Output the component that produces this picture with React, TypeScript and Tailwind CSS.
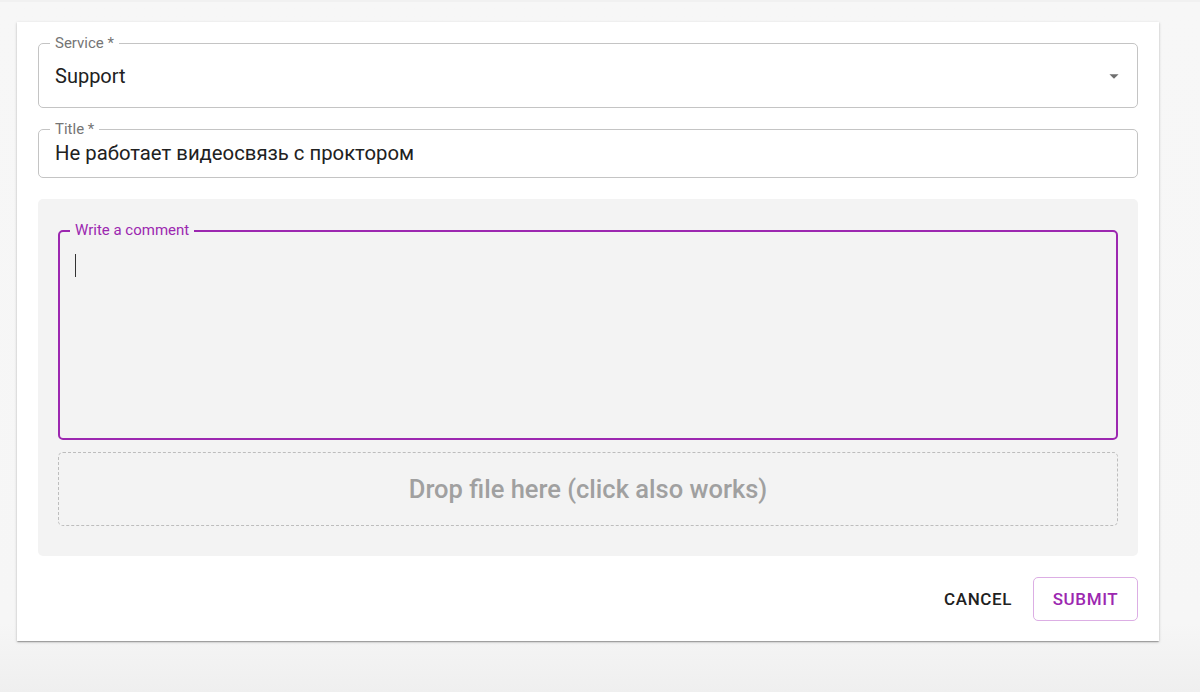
import { useState } from 'react';

export default function App() {
  const [comment, setComment] = useState('');

  return (
    <div className="min-h-[692px] bg-[linear-gradient(#f7f7f7_0%,#f6f6f6_90%,#efefef_100%)] border-t-2 border-[#f1f1f1] pt-[20px] pb-[51px] font-['Roboto',sans-serif]">
      <div className="ml-[17px] w-[1142px] bg-white p-[21px] pb-[20px] shadow-[0_1px_3px_rgba(0,0,0,0.2),0_1px_1px_rgba(0,0,0,0.14),0_2px_1px_-1px_rgba(0,0,0,0.12)]">
        {/* Service select */}
        <div className="relative h-[65px] rounded-[5px] border border-[#c4c4c4] flex items-center pl-[16px] pr-[12px]">
          <span className="absolute -top-[11px] left-[11px] bg-white px-[5px] text-[15px] leading-[20px] text-[#757575]">
            Service *
          </span>
          <span className="flex-1 text-[20px] text-[#212121]">Support</span>
          <svg width="22" height="22" viewBox="0 0 24 24" className="text-[#6f6f6f]">
            <path d="M7 10l5 5 5-5z" fill="currentColor" />
          </svg>
        </div>

        {/* Title */}
        <div className="relative mt-[21px] h-[49px] rounded-[5px] border border-[#c4c4c4] flex items-center pl-[16px]">
          <span className="absolute -top-[11px] left-[11px] bg-white px-[5px] text-[15px] leading-[20px] text-[#757575]">
            Title *
          </span>
          <span className="text-[20.3px] text-[#212121]">Не работает видеосвязь с проктором</span>
        </div>

        {/* Comment + dropzone */}
        <div className="mt-[21px] rounded-[5px] bg-[#f3f3f3] px-[20px] pt-[31px] pb-[30px]">
          <div className="relative h-[210px] rounded-[5px] border-2 border-[#9c27b0]">
            <span className="absolute -top-[12px] left-[10px] bg-[#f3f3f3] px-[5px] text-[15px] leading-[20px] text-[#9c27b0]">
              Write a comment
            </span>
            <textarea
              value={comment}
              onChange={(e) => setComment(e.target.value)}
              className="h-full w-full resize-none bg-transparent px-[15px] pt-[18px] text-[20px] text-[#212121] outline-none"
            />
            <div className="absolute left-[15px] top-[22px] h-[23px] w-px bg-[#333]" />
          </div>
          <div className="mt-[12px] flex h-[74px] items-center justify-center rounded-[5px] border border-dashed border-[#bdbdbd]">
            <span className="text-[25.5px] font-medium text-[#a0a0a0]">Drop file here (click also works)</span>
          </div>
        </div>

        {/* Actions */}
        <div className="mt-[21px] flex items-center justify-end gap-[10px]">
          <button className="h-[44px] px-[11px] pt-[2px] text-[17px] font-medium tracking-[0.6px] text-[#212121]">
            CANCEL
          </button>
          <button className="h-[44px] w-[105px] rounded-[5px] border border-[#dcaee4] pt-[2px] text-[17px] font-medium tracking-[0.6px] text-[#9c27b0]">
            SUBMIT
          </button>
        </div>
      </div>
    </div>
  );
}
